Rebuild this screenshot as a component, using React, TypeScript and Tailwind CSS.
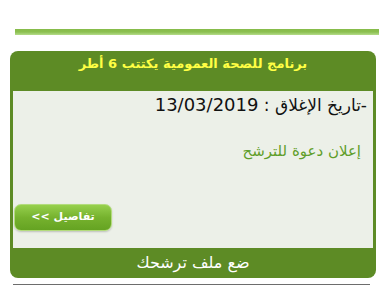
import React from "react";

export default function App() {
  return (
    <div className="w-[379px] h-[286px] bg-white overflow-hidden" style={{ fontFamily: '"DejaVu Sans", sans-serif' }}>
      <div className="pt-[29px] pl-[15px]">
        <div className="h-[6px] bg-gradient-to-b from-[#86bb4a] via-[#8cc050] to-[#b5dc8a]" />
      </div>
      <div className="mt-[16px] ml-[10px] w-[366px]" dir="rtl">
        <div className="h-[40px] bg-[#5d8b25] rounded-t-[8px] pt-[3px] text-center text-[#ffff44] font-bold text-[13px] leading-[20px]">
          برنامج للصحة العمومية يكتتب 6 أطر
        </div>
        <div className="h-[157px] bg-[#ecf0e8] border-x-[3px] border-[#5d8b25] flex flex-col">
          <div className="pt-[3px] pr-[6px] text-[18px] leading-[22px] text-[#111]">
            <span className="text-[17px]">-تاريخ الإغلاق : </span>13/03/2019
          </div>
          <div className="mt-[25px] pr-[12px] text-[15px] leading-[20px] text-[#5f9e2a]">
            إعلان دعوة للترشح
          </div>
          <div className="flex-1" />
          <div className="flex justify-end pl-[1px] pb-[17px]">
            <div className="w-[98px] h-[27px] rounded-[7px] border border-[#b3dc7c] bg-gradient-to-b from-[#96d04c] via-[#76b22e] to-[#65a322] shadow-[0_1px_2px_rgba(0,0,0,0.2)] flex items-center justify-center text-white font-bold text-[11px]">
              تفاصيل &gt;&gt;
            </div>
          </div>
        </div>
        <div className="h-[30px] bg-[#5d8b25] rounded-b-[8px] text-center text-white text-[16px] leading-[30px]">
          ضع ملف ترشحك
        </div>
      </div>
      <div className="mt-[6px] ml-[13px] w-[357px] h-[1px] bg-[#6d6d6d]" />
    </div>
  );
}
